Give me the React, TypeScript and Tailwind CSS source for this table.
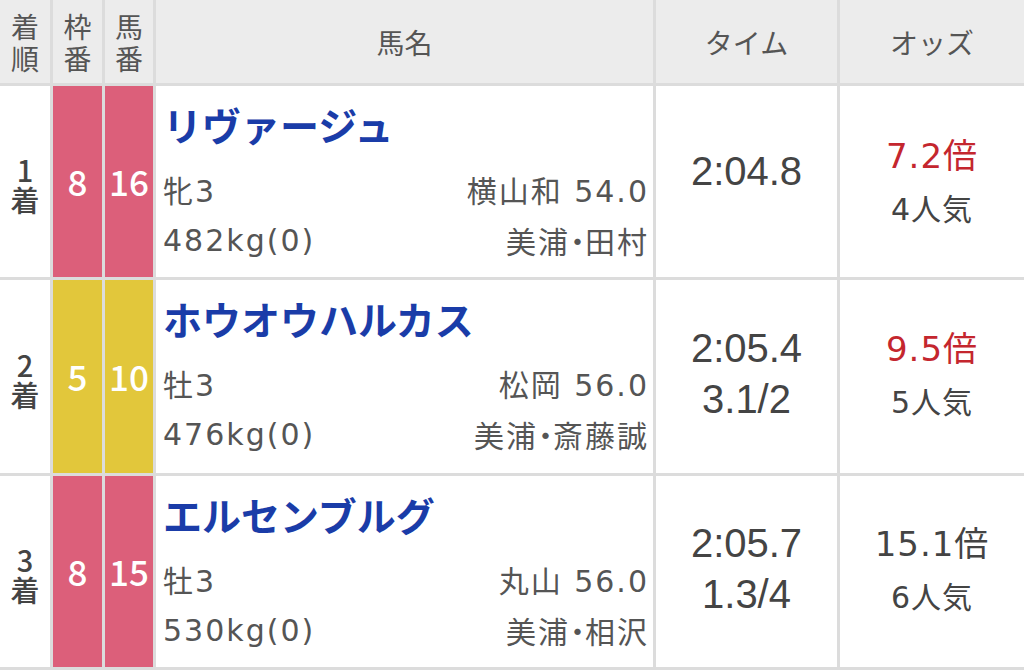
type Result = {
  rank: number
  waku: number
  uma: number
  frame: 'pink' | 'yellow'
  name: string
  sexAge: string
  jockey: string
  weight: string
  stable: [string, string]
  time: string
  margin: string | null
  odds: string
  pop: string
  hot: boolean
}

const results: Result[] = [
  { rank: 1, waku: 8, uma: 16, frame: 'pink', name: 'リヴァージュ', sexAge: '牝3', jockey: '横山和 54.0', weight: '482kg(0)', stable: ['美浦', '田村'], time: '2:04.8', margin: null, odds: '7.2倍', pop: '4人気', hot: true },
  { rank: 2, waku: 5, uma: 10, frame: 'yellow', name: 'ホウオウハルカス', sexAge: '牡3', jockey: '松岡 56.0', weight: '476kg(0)', stable: ['美浦', '斎藤誠'], time: '2:05.4', margin: '3.1/2', odds: '9.5倍', pop: '5人気', hot: true },
  { rank: 3, waku: 8, uma: 15, frame: 'pink', name: 'エルセンブルグ', sexAge: '牡3', jockey: '丸山 56.0', weight: '530kg(0)', stable: ['美浦', '相沢'], time: '2:05.7', margin: '1.3/4', odds: '15.1倍', pop: '6人気', hot: false }
]

const sans = "font-['Liberation_Sans','Noto_Sans_CJK_JP',sans-serif]"
const wide = "font-['DejaVu_Sans','Noto_Sans_CJK_JP',sans-serif]"
const jp = "font-['Noto_Sans_CJK_JP',sans-serif]"

function HeadCell({ text }: { text: string }) {
  return (
    <div className={`bg-[#ececec] flex items-center justify-center text-center whitespace-pre-line text-[28px] leading-[32px] text-[#555] ${jp}`}>
      {text}
    </div>
  )
}

export default function App() {
  return (
    <div className="w-[1024px] h-[672px] bg-white overflow-hidden">
      <div className="grid grid-cols-[50px_49px_48px_497px_181px_184px] grid-rows-[83px_191px_193px_191px] gap-[3px] bg-[#dcdcdc] pb-[3px]">
        {/* header */}
        <HeadCell text={'着\n順'} />
        <HeadCell text={'枠\n番'} />
        <HeadCell text={'馬\n番'} />
        <HeadCell text="馬名" />
        <HeadCell text="タイム" />
        <HeadCell text="オッズ" />

        {results.map((r) => {
          const frameBg = r.frame === 'pink' ? 'bg-[#dc5f7a]' : 'bg-[#e2c73b]'
          return [
            <div key={`rank-${r.rank}`} className={`bg-white flex items-center justify-center text-center whitespace-pre-line pt-[4px] text-[29px] leading-[30px] font-medium text-[#444] ${jp}`}>
              {`${r.rank}\n着`}
            </div>,
            <div key={`waku-${r.rank}`} className={`${frameBg} flex items-center justify-center text-white text-[35px] font-medium ${jp}`}>
              {r.waku}
            </div>,
            <div key={`uma-${r.rank}`} className={`${frameBg} flex items-center justify-center text-white text-[35px] font-medium ${jp}`}>
              {r.uma}
            </div>,
            <div key={`name-${r.rank}`} className="bg-white flex flex-col pl-[7px] pr-[4px]">
              <div className={`mt-[16px] h-[44px] leading-[44px] text-[39px] font-bold text-[#1a3ca8] ${jp}`}>{r.name}</div>
              <div className={`mt-[21px] text-[30px] leading-[49px] tracking-[2px] text-[#555] ${wide}`}>
                <div className="flex justify-between">
                  <span>{r.sexAge}</span>
                  <span>{r.jockey}</span>
                </div>
                <div className="flex justify-between">
                  <span>{r.weight}</span>
                  <span>
                    {r.stable[0]}
                    <span className={`${jp} [font-feature-settings:'palt'] tracking-normal`}>・</span>
                    {r.stable[1]}
                  </span>
                </div>
              </div>
            </div>,
            <div key={`time-${r.rank}`} className={`bg-white flex flex-col items-center justify-center text-[40px] leading-[51px] text-[#444] ${sans} ${r.margin ? 'pb-[6px]' : 'pb-[20px]'}`}>
              <span>{r.time}</span>
              {r.margin && <span>{r.margin}</span>}
            </div>,
            <div key={`odds-${r.rank}`} className={`bg-white flex flex-col items-center justify-center tracking-[1px] ${wide} ${r.rank === 1 ? '' : 'pb-[4px]'}`}>
              <span className={`text-[34px] leading-[56px] ${r.hot ? 'text-[#c4262e]' : 'text-[#444]'}`}>{r.odds}</span>
              <span className="text-[30px] leading-[52px] text-[#444]">{r.pop}</span>
            </div>
          ]
        })}
      </div>
    </div>
  )
}
